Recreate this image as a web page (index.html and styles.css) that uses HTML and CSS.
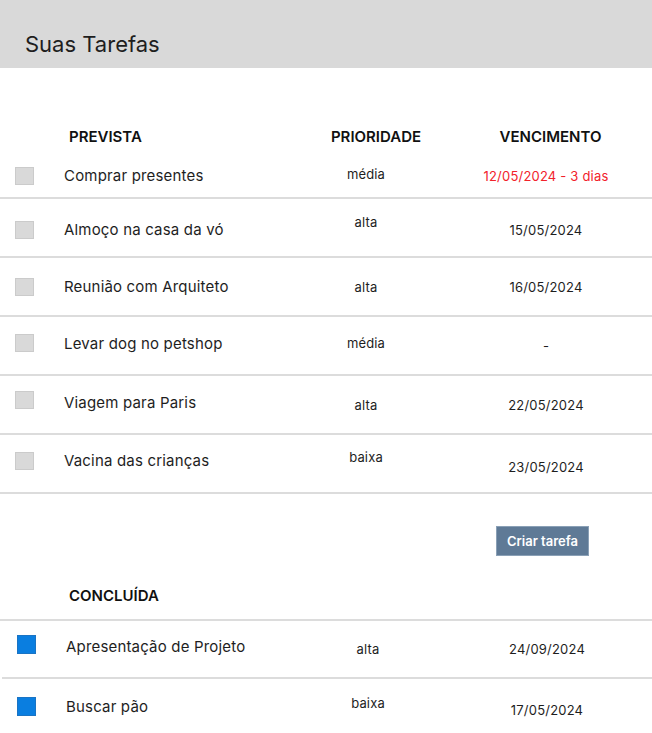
FILE: index.html
```html
<!DOCTYPE html>
<html lang="pt-BR">
<head>
<meta charset="utf-8">
<title>Suas Tarefas</title>
<link rel="stylesheet" href="styles.css">
</head>
<body>
<header class="topbar"><h1 class="title">Suas Tarefas</h1></header>

<section class="group">
  <div class="head-row">
    <span class="h-name">PREVISTA</span>
    <span class="h-prio">PRIORIDADE</span>
    <span class="h-date">VENCIMENTO</span>
  </div>
  <div class="row first">
    <span class="box"></span>
    <span class="name">Comprar presentes</span>
    <span class="prio up-2">média</span>
    <span class="date late">12/05/2024 - 3 dias</span>
  </div>
  <div class="row">
    <span class="box down-25"></span>
    <span class="name down-25">Almoço na casa da vó</span>
    <span class="prio up-55">alta</span>
    <span class="date down-25">15/05/2024</span>
  </div>
  <div class="row">
    <span class="box"></span>
    <span class="name">Reunião com Arquiteto</span>
    <span class="prio">alta</span>
    <span class="date">16/05/2024</span>
  </div>
  <div class="row">
    <span class="box up-25"></span>
    <span class="name up-15">Levar dog no petshop</span>
    <span class="prio up-25">média</span>
    <span class="date">-</span>
  </div>
  <div class="row">
    <span class="box up-45"></span>
    <span class="name up-2">Viagem para Paris</span>
    <span class="prio">alta</span>
    <span class="date">22/05/2024</span>
  </div>
  <div class="row">
    <span class="box up-25"></span>
    <span class="name up-25">Vacina das crianças</span>
    <span class="prio up-65">baixa</span>
    <span class="date down-35">23/05/2024</span>
  </div>
</section>

<div class="actions"><button class="btn" type="button">Criar tarefa</button></div>

<section class="group done">
  <div class="done-head"><span>CONCLUÍDA</span></div>
  <div class="row">
    <span class="box checked up-45"></span>
    <span class="name up-2">Apresentação de Projeto</span>
    <span class="prio">alta</span>
    <span class="date">24/09/2024</span>
  </div>
  <div class="row last">
    <span class="box checked up-15"></span>
    <span class="name up-15">Buscar pão</span>
    <span class="prio up-5">baixa</span>
    <span class="date down-2">17/05/2024</span>
  </div>
</section>
</body>
</html>
```
FILE: styles.css
```css
* { box-sizing: border-box; }

html, body {
  margin: 0;
  padding: 0;
  background: #ffffff;
}

body {
  font-family: Inter, "Liberation Sans", sans-serif;
  color: #1e1e1e;
  width: 652px;
  overflow: hidden;
}

.topbar {
  height: 68px;
  background: #d9d9d9;
  display: flex;
  align-items: center;
  padding-left: 25px;
  padding-top: 20px;
}

.title {
  margin: 0;
  font-size: 22px;
  font-weight: 400;
  line-height: 28px;
  color: #1e1e1e;
}

.head-row {
  display: grid;
  grid-template-columns: 64px 236px 132px 1fr;
  padding-top: 60px;
  padding-bottom: 9px;
  font-size: 15px;
  font-weight: 600;
  line-height: 18px;
  color: #111;
}

.h-name { grid-column: 2; padding-left: 5px; }
.h-prio { grid-column: 3; text-align: center; padding-left: 20px; white-space: nowrap; }
.h-date { grid-column: 4; text-align: center; padding-left: 17px; }

.row {
  display: grid;
  grid-template-columns: 64px 236px 132px 1fr;
  align-items: center;
  height: 59px;
  border-bottom: 2px solid #dcdcdc;
}

.row.first { height: 44px; }
.row.last { border-bottom: none; }

.box {
  width: 19px;
  height: 18px;
  margin-left: 15px;
  background: #d9d9d9;
  border: 1px solid #cbcbcb;
}

.box.checked {
  height: 19px;
  background: #0a7ee0;
  border-color: #1a74c4;
}

.name {
  font-size: 15px;
  line-height: 18px;
  letter-spacing: 0.18px;
  white-space: nowrap;
}

.prio {
  font-size: 13px;
  line-height: 16px;
  letter-spacing: 0.15px;
  text-align: center;
}

.date {
  font-size: 13px;
  line-height: 16px;
  letter-spacing: 0.2px;
  text-align: center;
  padding-left: 8px;
  white-space: nowrap;
}

.date.late { color: #f2222b; }

/* small vertical nudges copied from the design */
.down-2  { margin-top: 4px; }
.down-25 { margin-top: 5px; }
.down-35 { margin-top: 7px; }
.up-15 { margin-bottom: 3px; }
.up-2  { margin-bottom: 4px; }
.up-25 { margin-bottom: 5px; }
.up-45 { margin-bottom: 9px; }
.up-5  { margin-bottom: 10px; }
.up-55 { margin-bottom: 11px; }
.up-65 { margin-bottom: 13px; }

.actions {
  display: flex;
  justify-content: flex-end;
  padding-top: 32px;
  padding-right: 63px;
}

.btn {
  width: 93px;
  height: 30px;
  background: #5f7a96;
  border: 1px solid #8aa0b6;
  color: #ffffff;
  font-family: Inter, "Liberation Sans", sans-serif;
  font-size: 13px;
  font-weight: 600;
  padding: 0;
  cursor: pointer;
}

.done { padding-left: 2px; }

.done-head {
  padding-top: 31px;
  padding-bottom: 14px;
  padding-left: 69px;
  font-size: 15px;
  font-weight: 600;
  line-height: 18px;
  color: #111;
  border-bottom: 2px solid #dcdcdc;
  margin-left: -2px;
}

.done .row { height: 58px; }
.done .row.last { height: 58px; }
```
